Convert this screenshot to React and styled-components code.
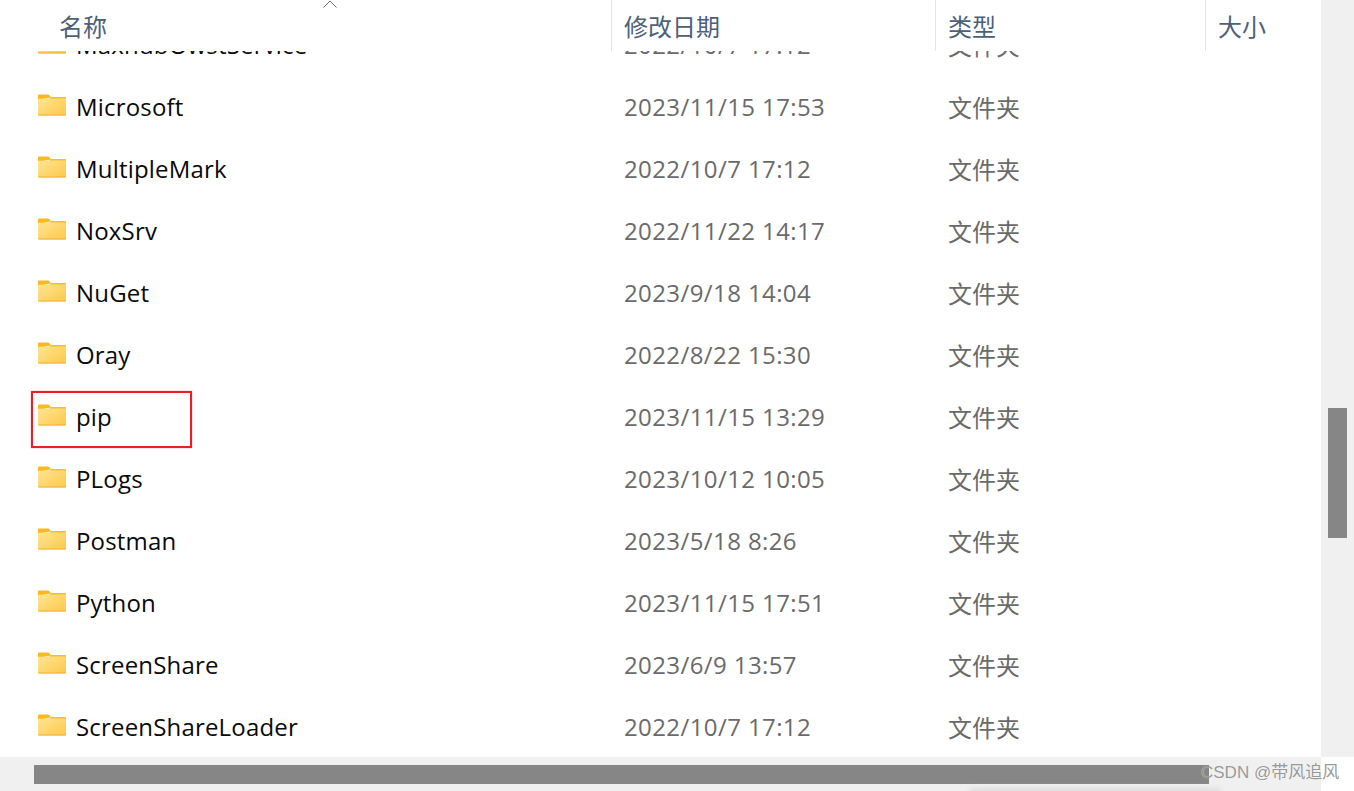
import styled, { createGlobalStyle } from "styled-components";

const GlobalStyle = createGlobalStyle`
  html, body {
    margin: 0;
    padding: 0;
    background: #fff;
  }
  body {
    font-family: "Open Sans", "Noto Sans CJK SC", sans-serif;
    overflow: hidden;
  }
`;

const Win = styled.div`
  width: 1354px;
  height: 791px;
  position: relative;
  overflow: hidden;
  display: grid;
  grid-template-columns: 1321px 33px;
  grid-template-rows: 757px 34px;
`;

const Main = styled.div`
  display: flex;
  flex-direction: column;
  overflow: hidden;
`;

const Head = styled.div`
  height: 51px;
  flex: none;
  display: grid;
  grid-template-columns: 611px 324px 270px 1fr;
  position: relative;
  background: #fff;
`;

const HeadCell = styled.div`
  box-sizing: border-box;
  border-left: ${(p) => (p.$first ? "none" : "1px solid #e5e5e5")};
  padding-left: ${(p) => (p.$first ? "59px" : "12px")};
  font-size: 24px;
  line-height: 51px;
  color: #4c607a;
  font-family: "Noto Sans CJK SC", sans-serif;
`;

const SortMark = styled.svg`
  position: absolute;
  left: 323px;
  top: 0;
`;

const List = styled.div`
  flex: 1;
  overflow: hidden;
`;

const Rows = styled.div`
  margin-top: -37px;
`;

const Row = styled.div`
  height: 62px;
  box-sizing: border-box;
  padding-bottom: 2px;
  position: relative;
  display: grid;
  grid-template-columns: 624px 324px 1fr;
  align-items: center;
  font-size: 24px;
`;

const NameCell = styled.div`
  display: flex;
  align-items: center;
  padding-left: 38px;
  gap: 10px;
  color: #0a0a0a;
  letter-spacing: 0.18px;
`;

const FolderSvg = styled.svg`
  flex: none;
  position: relative;
  top: -1px;
`;

const DateCell = styled.div`
  color: #6a6a6a;
  letter-spacing: 0.4px;
`;

const TypeCell = styled.div`
  color: #6a6a6a;
  font-family: "Noto Sans CJK SC", sans-serif;
`;

const RedBox = styled.div`
  position: absolute;
  left: 31px;
  top: 5px;
  width: 161px;
  height: 57px;
  box-sizing: border-box;
  border: 2px solid #f01c24;
  box-shadow: 0 0 1px rgba(240, 28, 36, 0.6);
`;

const VTrack = styled.div`
  background: #f0f0f0;
  padding: 408px 7px 0;
`;

const VThumb = styled.div`
  height: 130px;
  width: 19px;
  background: #868686;
`;

const HTrack = styled.div`
  background: #f0f0f0;
  padding: 8px 0 0 34px;
  position: relative;
  overflow: hidden;
`;

const HThumb = styled.div`
  height: 19px;
  width: 1175px;
  background: #868686;
`;

const EdgeShadow = styled.div`
  position: absolute;
  left: 970px;
  bottom: -5px;
  width: 250px;
  height: 7px;
  background: #d8d8d8;
  filter: blur(3px);
`;

const Corner = styled.div`
  background: #fff;
`;

const Watermark = styled.div`
  position: absolute;
  left: 1201px;
  top: 762px;
  font-family: "Liberation Sans", "Noto Sans CJK SC", sans-serif;
  font-size: 17px;
  line-height: 22px;
  color: rgba(140, 140, 140, 0.9);
  text-shadow: 0 0 1px rgba(255, 255, 255, 0.7);
  white-space: nowrap;
`;

const folders = [
  ["MaxhubOwstService", "2022/10/7 17:12"],
  ["Microsoft", "2023/11/15 17:53"],
  ["MultipleMark", "2022/10/7 17:12"],
  ["NoxSrv", "2022/11/22 14:17"],
  ["NuGet", "2023/9/18 14:04"],
  ["Oray", "2022/8/22 15:30"],
  ["pip", "2023/11/15 13:29"],
  ["PLogs", "2023/10/12 10:05"],
  ["Postman", "2023/5/18 8:26"],
  ["Python", "2023/11/15 17:51"],
  ["ScreenShare", "2023/6/9 13:57"],
  ["ScreenShareLoader", "2022/10/7 17:12"],
];

const FolderIcon = ({ id }) => (
  <FolderSvg width="28" height="22" viewBox="0 0 28 22">
    <defs>
      <linearGradient id={id} x1="0" y1="0" x2="1" y2="1">
        <stop offset="0" stopColor="#ffe596" />
        <stop offset="1" stopColor="#fcc94a" />
      </linearGradient>
    </defs>
    <path d="M1 0.5h8.5c1 0 1.6 0.4 2.3 1.2L13.5 3.5H12L1 6H0V1.5C0 1 0.4 0.5 1 0.5z" fill="#fbb81f" />
    <path d="M0 5.5 C0 5 0.4 4.8 1 4.8L11 4.6 13 3H27c0.6 0 1 0.4 1 1v16.5c0 0.6-0.4 1-1 1H1c-0.6 0-1-0.4-1-1z" fill={`url(#${id})`} />
    <path d="M13 3H27c0.6 0 1 0.4 1 1v0.6H12z" fill="#f8bb2c" />
    <path d="M0 20.4h28v0.1c0 0.6-0.4 1-1 1H1c-0.6 0-1-0.4-1-1z" fill="#f2b233" />
  </FolderSvg>
);

const App = () => {
  return (
    <Win>
      <GlobalStyle />
      <Main>
        <Head>
          <HeadCell $first>名称</HeadCell>
          <HeadCell>修改日期</HeadCell>
          <HeadCell>类型</HeadCell>
          <HeadCell>大小</HeadCell>
          <SortMark width="14" height="8" viewBox="0 0 14 8">
            <path d="M0.5 7.5L7 1l6.5 6.5" fill="none" stroke="#6d6d6d" strokeWidth="1" />
          </SortMark>
        </Head>
        <List>
          <Rows>
            {folders.map(([name, date], i) => (
              <Row key={name}>
                <NameCell>
                  <FolderIcon id={`folder-${i}`} />
                  {name}
                </NameCell>
                <DateCell>{date}</DateCell>
                <TypeCell>文件夹</TypeCell>
                {name === "pip" && <RedBox />}
              </Row>
            ))}
          </Rows>
        </List>
      </Main>
      <VTrack>
        <VThumb />
      </VTrack>
      <HTrack>
        <HThumb />
        <EdgeShadow />
      </HTrack>
      <Corner />
      <Watermark>CSDN @带风追风</Watermark>
    </Win>
  );
};

export default App;
